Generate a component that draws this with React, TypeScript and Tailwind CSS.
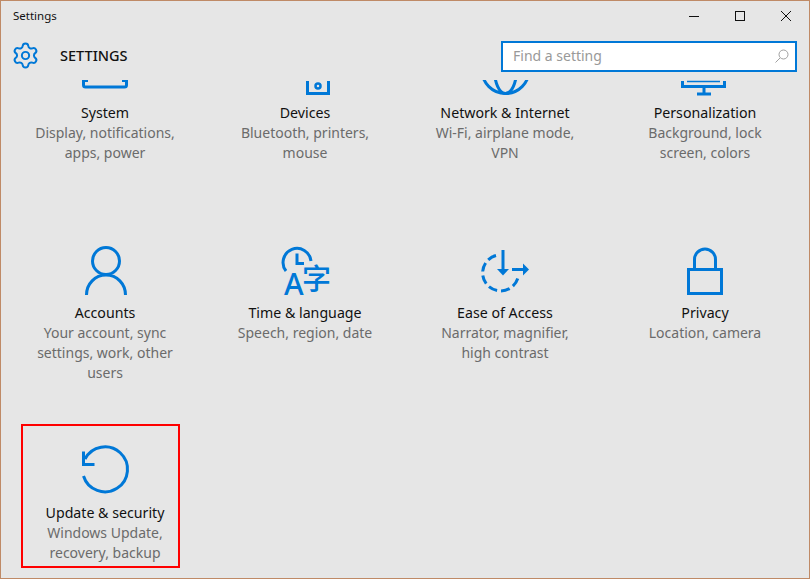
import React from 'react';
import { Settings as Gear } from 'lucide-react';

const iconProps = {
  width: 50,
  height: 50,
  viewBox: '0 0 50 50',
  fill: 'none',
  stroke: '#0078d7',
  strokeWidth: 3,
  overflow: 'visible',
};

const SystemIcon = () => (
  <svg {...iconProps}>
    <path d="M3.500 35v4a2 2 0 0 0 2 2h39a2 2 0 0 0 2-2v-4" />
    <path d="M2 35h6M42 35h6" strokeWidth={2} />
  </svg>
);

const DevicesIcon = () => (
  <svg {...iconProps}>
    <path d="M27.500 35v12.500h21V35" />
    <circle cx="38" cy="40" r="2.500" strokeWidth={2.5} />
  </svg>
);

const NetworkIcon = () => (
  <svg {...iconProps}>
    <circle cx="25.500" cy="24" r="23.500" />
    <ellipse cx="25.500" cy="24" rx="11" ry="23.500" />
  </svg>
);

const PersonalizationIcon = () => (
  <svg {...iconProps}>
    <path d="M2.500 35v5.500h42V35" />
    <path d="M7 35.500h33" strokeWidth={1.5} />
    <path d="M24 41v7M17 48h14" />
  </svg>
);

const AccountsIcon = () => (
  <svg {...iconProps}>
    <circle cx="26" cy="15" r="13.500" />
    <path d="M6.500 49c0-11 8.500-20 19.500-20s19.500 9 19.500 20" />
  </svg>
);

const TimeIcon = () => (
  <svg {...iconProps}>
    <path d="M6 25A14 14 0 1 1 31 15" />
    <path d="M17 7.500v10h7" />
    <text x="4" y="49" fontSize="30" fontWeight="500" fill="#0078d7" stroke="none" fontFamily="'Noto Sans', sans-serif">A</text>
    <text x="22" y="44" fontSize="29" fontWeight="500" fill="#0078d7" stroke="none" fontFamily="'Noto Sans CJK SC', sans-serif">字</text>
  </svg>
);

const EaseIcon = () => (
  <svg {...iconProps}>
    <path d="M16 9.500A18 18 0 1 0 38.500 29" strokeDasharray="9 4" />
    <path d="M23 4v20" />
    <path d="M17 23h12l-6 6.500z" fill="#0078d7" stroke="none" />
    <path d="M32 23.500h11" />
    <path d="M43 17.500l6 6-6 6z" fill="#0078d7" stroke="none" />
  </svg>
);

const PrivacyIcon = () => (
  <svg {...iconProps}>
    <rect x="8.500" y="23.500" width="33" height="24" />
    <path d="M14.500 23v-9.500a10.500 10.500 0 0 1 21 0V23" />
  </svg>
);

const UpdateIcon = () => (
  <svg {...iconProps}>
    <path d="M5 13A22.500 22.500 0 1 1 3.500 30" />
    <path d="M3.500 5.500v13h11" />
  </svg>
);

const TILES = [
  { title: 'System', lines: ['Display, notifications,', 'apps, power'], Icon: SystemIcon },
  { title: 'Devices', lines: ['Bluetooth, printers,', 'mouse'], Icon: DevicesIcon },
  { title: 'Network & Internet', lines: ['Wi-Fi, airplane mode,', 'VPN'], Icon: NetworkIcon },
  { title: 'Personalization', lines: ['Background, lock', 'screen, colors'], Icon: PersonalizationIcon },
  { title: 'Accounts', lines: ['Your account, sync', 'settings, work, other', 'users'], Icon: AccountsIcon },
  { title: 'Time & language', lines: ['Speech, region, date'], Icon: TimeIcon },
  { title: 'Ease of Access', lines: ['Narrator, magnifier,', 'high contrast'], Icon: EaseIcon },
  { title: 'Privacy', lines: ['Location, camera'], Icon: PrivacyIcon },
  { title: 'Update & security', lines: ['Windows Update,', 'recovery, backup'], Icon: UpdateIcon, marked: true },
];

export default function App() {
  return (
    <div className="w-[810px] h-[579px] flex flex-col overflow-hidden bg-[#e6e6e6] border border-[#bf8a66] font-['Noto_Sans',sans-serif] text-[#111]">
      {/* Title bar */}
      <div className="h-[30px] shrink-0 flex items-center justify-between pl-3 pr-[18px]">
        <span className="text-[11.5px]">Settings</span>
        <div className="flex items-center gap-[36px]">
          <svg width="10" height="10" viewBox="0 0 10 10" stroke="#111" fill="none"><path d="M0 5.500h10" /></svg>
          <svg width="10" height="10" viewBox="0 0 10 10" stroke="#111" fill="none"><rect x="0.500" y="0.500" width="9" height="9" /></svg>
          <svg width="10" height="10" viewBox="0 0 10 10" stroke="#111" fill="none"><path d="M0 0l10 10M10 0L0 10" /></svg>
        </div>
      </div>

      {/* Header */}
      <div className="h-[49px] shrink-0 flex items-center pl-[9.5px] pr-3">
        <Gear size={29} strokeWidth={1.65} color="#0078d7" />
        <span className="ml-[20.5px] text-[14.5px] font-medium">SETTINGS</span>
        <div className="ml-auto w-[296px] h-[31px] mt-[2px] bg-white border-2 border-[#0078d7] flex items-center justify-between pl-[10px] pr-[6px] pb-[2px] text-[14px] text-[#999]">
          <span>Find a setting</span>
          <svg width="14" height="14" viewBox="0 0 14 14" fill="none" stroke="#a0a0a0"><circle cx="8.500" cy="5.500" r="4.500" /><path d="M5 9l-4.500 4.500" /></svg>
        </div>
      </div>

      {/* Tiles, scrolled down a little */}
      <div className="flex-1 overflow-hidden pl-1">
        <div className="-mt-[59px] grid grid-cols-[repeat(4,200px)] auto-rows-[200px]">
          {TILES.map(({ title, lines, Icon, marked }) => (
            <div key={title} className="relative flex flex-col items-center pt-[25px] text-[14px] leading-[20px]">
              {marked && <div className="absolute left-[16px] top-[3px] w-[159px] h-[144px] border-2 border-[#ff0000]" />}
              <Icon />
              <div className="mt-[7px] text-[14.2px]">{title}</div>
              {lines.map((l) => (
                <div key={l} className="text-[#6b6b6b]">{l}</div>
              ))}
            </div>
          ))}
        </div>
      </div>
    </div>
  );
}
